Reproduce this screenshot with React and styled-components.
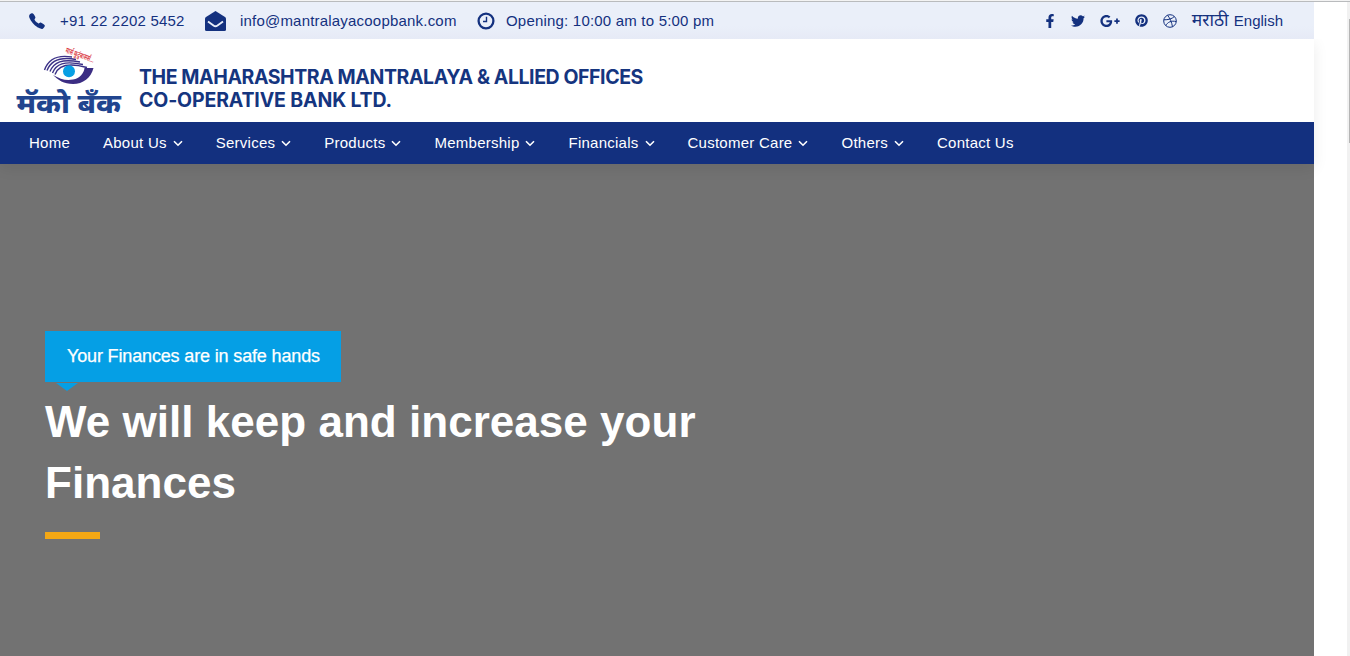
import React from "react";
import styled, { createGlobalStyle } from "styled-components";
import { FaFacebookF, FaTwitter, FaGooglePlusG, FaPinterest } from "react-icons/fa";
import { IoCall } from "react-icons/io5";

const Global = createGlobalStyle`
  * { box-sizing: border-box; }
  body { margin: 0; background: #fff; overflow: hidden; font-family: "Liberation Sans", Arial, "Noto Sans", sans-serif; }
`;

const Screen = styled.div`
  height: 656px;
  display: flex;
  border-top: 1px solid #f3f3f3;
`;
const Page = styled.div`
  width: 1314px;
  border-top: 1px solid #b9bbbd;
  display: flex;
  flex-direction: column;
`;
const Gutter = styled.div`
  flex: 1;
  border-top: 1px solid #b9bbbd;
  display: flex;
  justify-content: flex-end;
`;
const ScrollTrack = styled.div`
  width: 3px;
  background: #f1f1f1;
  padding: 17px 0 0 2px;
`;
const ScrollThumb = styled.div`
  height: 124px;
  background: #b5b5b5;
`;
const Header = styled.header`
  position: relative;
`;
const TopBar = styled.div`
  height: 37px;
  padding: 0 31px 0 28px;
  display: flex;
  justify-content: space-between;
  align-items: center;
  color: #14317f;
  font-size: 15px;
  background: linear-gradient(#eaeff9 65%, #e6eaf6);
`;
const MainBar = styled.div`
  box-shadow: 0 4px 14px rgba(0, 0, 0, 0.08);
  clip-path: inset(0 -20px -24px 0);
`;
const Contacts = styled.div`
  display: flex;
  align-items: center;
`;
const Contact = styled.span`
  display: flex;
  align-items: center;
  white-space: nowrap;
  width: ${(p) => p.$width}px;
  gap: ${(p) => p.$gap}px;
  letter-spacing: 0.2px;
  svg { flex: none; }
`;
const Socials = styled.div`
  display: flex;
  align-items: center;
  gap: 15px;
`;
const FacebookIcon = styled(FaFacebookF)`
  margin-right: -1.5px;
`;
const Languages = styled.div`
  display: flex;
  align-items: baseline;
  gap: 4px;
  padding-top: 2px;
  line-height: 20px;
  white-space: nowrap;
`;
const Marathi = styled.span`
  width: 38px;
  font-family: "Noto Sans Devanagari", "Noto Sans", sans-serif;
  font-size: 17.5px;
  line-height: 20px;
`;
const Brand = styled.div`
  height: 83px;
  background: #fff;
  display: flex;
  padding-left: 14px;
`;
const LogoBox = styled.div`
  width: 125px;
  padding-top: 7px;
`;
const BrandName = styled.div`
  padding-top: 27px;
  font: 700 19.5px/23px Inter, "Liberation Sans", sans-serif;
  color: #15357f;
  white-space: nowrap;
`;
const NameLine = styled.div`
  letter-spacing: ${(p) => p.$spacing}px;
`;
const Nav = styled.nav`
  height: 42px;
  background: #13307f;
  color: #fff;
  display: flex;
  align-items: center;
  gap: 33px;
  padding: 0 0 2px 29px;
  font-size: 15px;
  letter-spacing: 0.25px;
`;
const NavItem = styled.a`
  display: flex;
  align-items: center;
  gap: 6px;
  white-space: nowrap;
  svg { margin-top: 2px; }
`;
const Hero = styled.main`
  flex: 1;
  background: #727272;
  padding: 167px 0 0 45px;
`;
const Tagline = styled.div`
  position: relative;
  width: 296px;
  height: 51px;
  background: #059fe5;
  color: #fff;
  font-size: 18px;
  line-height: 50px;
  padding-left: 22px;
  letter-spacing: -0.15px;
  white-space: nowrap;
  -webkit-text-stroke: 0.25px #fff;
  &::after {
    content: "";
    position: absolute;
    left: 11px;
    top: 52px;
    border: 11px solid transparent;
    border-top: 8px solid #059fe5;
    border-bottom: 0;
  }
`;
const Title = styled.h1`
  margin: 9px 0 0;
  width: 700px;
  color: #fff;
  font-size: 44px;
  line-height: 61px;
  font-weight: 700;
  letter-spacing: 0.03px;
`;
const Rule = styled.div`
  width: 55px;
  height: 7px;
  margin-top: 19px;
  background: #f4a815;
`;

const Chevron = () => (
  <svg width="10" height="7" viewBox="0 0 10 7" fill="none" stroke="#fff" strokeWidth="1.6">
    <path d="M1 1.2 5 5.2 9 1.2" />
  </svg>
);
const Envelope = () => (
  <svg width="21" height="20" viewBox="0 0 21 20">
    <path d="M10.500 0 20 6Q21 6.700 21 8V18.500Q21 20 19.500 20H1.500Q0 20 0 18.500V8Q0 6.700 1 6Z" fill="#14317f" />
    <path d="M3 10.500 8.500 14.500Q10.500 15.900 12.500 14.500L18 10.500" fill="none" stroke="#eaeff9" strokeWidth="1.900" />
  </svg>
);
const Clock = () => (
  <svg width="18" height="18" viewBox="0 0 18 18" fill="none" stroke="#14317f">
    <circle cx="9" cy="9" r="7.4" strokeWidth="2.3" />
    <path d="M9.5 4.8V9.5H6" strokeWidth="1.4" />
  </svg>
);
const Dribbble = () => (
  <svg width="14" height="14" viewBox="0 0 14 14" fill="none" stroke="#14317f" strokeWidth="1">
    <circle cx="7" cy="7" r="6.3" />
    <path d="M4.5 1.2C7 4.2 8.7 8 9.5 12.8M.8 5.8C5 5.9 9 5 11.3 2.5M2.8 11.7C4.5 8 8.5 6.3 13.2 7.6" />
  </svg>
);
const LogoSvg = styled.svg`
  overflow: visible;
`;
const LogoText = styled.text`
  font-family: "Noto Sans Devanagari", "Noto Sans", sans-serif;
  font-weight: ${(p) => p.$weight};
  font-size: ${(p) => p.$size}px;
`;
const Logo = () => (
  <LogoSvg width="110" height="72" viewBox="14 46 110 72">
    <LogoText $size={8} $weight={600} x="65" y="52.500" transform="rotate(20 65 52.500)" textLength="30" lengthAdjust="spacingAndGlyphs" fill="#d9343b">मार्स कुटुंबासर्स...</LogoText>
    <g fill="none" stroke="#3b3187" strokeWidth="1.4">
      <path d="M44.500 70C48 60 57 54.500 72 57" />
      <path d="M47 70.500C51 60.500 60 56.500 76 59.500" />
      <path d="M50 71.500C54 62 62 58.500 80 62" />
      <path d="M52.500 73C56 64 64 60.500 83 64.500" />
      <path d="M55 74.500C58 66 67 62 87 67.500" />
    </g>
    <path d="M53 75C60 79 66 81 73 79.500 80 78.500 84 73 84.500 68L93.500 68C91 78 83 84 73 84 64 84 58 80 53 75Z" fill="#3b2d83" />
    <circle cx="69" cy="71.300" r="6" fill="#089fe4" />
    <LogoText $size={27.5} $weight={800} x="16.500" y="112.500" textLength="104.500" lengthAdjust="spacingAndGlyphs" fill="#21458f">मॅको बँक</LogoText>
  </LogoSvg>
);

const menu = ["Home", "About Us", "Services", "Products", "Membership", "Financials", "Customer Care", "Others", "Contact Us"];

export default function App() {
  return (
    <>
      <Global />
      <Screen>
        <Page>
          <Header>
            <TopBar>
              <Contacts>
                <Contact $width={177} $gap={14}><IoCall size={18} />+91 22 2202 5452</Contact>
                <Contact $width={272} $gap={14}><Envelope />info@mantralayacoopbank.com</Contact>
                <Contact $width={240} $gap={11}><Clock />Opening: 10:00 am to 5:00 pm</Contact>
              </Contacts>
              <Socials>
                <FacebookIcon size={14} />
                <FaTwitter size={14} />
                <FaGooglePlusG size={20} />
                <FaPinterest size={13} />
                <Dribbble />
                <Languages><Marathi>मराठी</Marathi><span>English</span></Languages>
              </Socials>
            </TopBar>
            <MainBar>
              <Brand>
                <LogoBox><Logo /></LogoBox>
                <BrandName>
                  <NameLine $spacing={-0.42}>THE MAHARASHTRA MANTRALAYA &amp; ALLIED OFFICES</NameLine>
                  <NameLine $spacing={-0.15}>CO-OPERATIVE BANK LTD.</NameLine>
                </BrandName>
              </Brand>
              <Nav>
                {menu.map((label) => (
                  <NavItem key={label}>
                    {label}
                    {label !== "Home" && label !== "Contact Us" && <Chevron />}
                  </NavItem>
                ))}
              </Nav>
            </MainBar>
          </Header>
          <Hero>
            <Tagline>Your Finances are in safe hands</Tagline>
            <Title>We will keep and increase your Finances</Title>
            <Rule />
          </Hero>
        </Page>
        <Gutter><ScrollTrack><ScrollThumb /></ScrollTrack></Gutter>
      </Screen>
    </>
  );
}
